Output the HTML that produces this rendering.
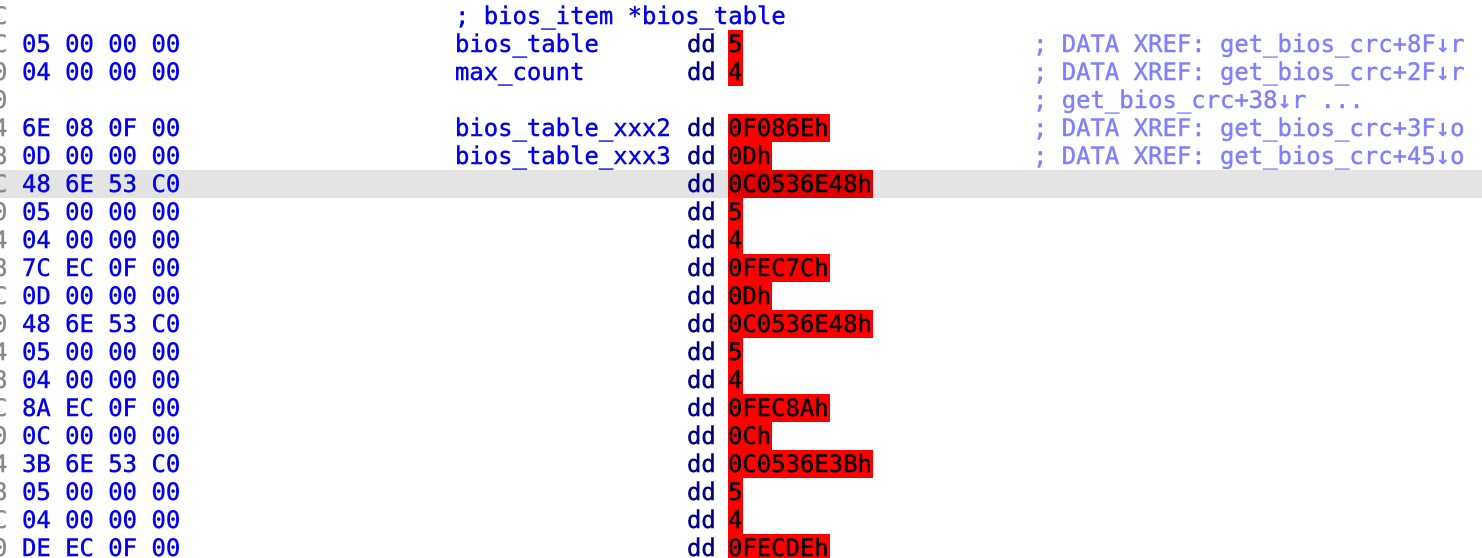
<!DOCTYPE html>
<html><head><meta charset="utf-8"><style>
html,body{margin:0;padding:0;background:#fff;width:1482px;height:558px;overflow:hidden}
body{position:relative;font-family:"DejaVu Sans Mono","Liberation Mono",monospace;font-size:23.9px}
.r{position:absolute;left:0;width:1482px;height:28px;line-height:28px;white-space:pre}
.r span{position:absolute;top:0;-webkit-text-stroke:0.45px currentColor}
.hl{background:#e4e4e4}
.g{left:-7px;color:#8a8a8a}
.h{left:22px;color:#0000ee}
.l{left:455px;color:#0000ee}
.d{left:687px;color:#000080}
.v{left:728px;background:#ff0000;color:#000;padding-right:1px}
.hl .v{background:#e00000}
.c{left:1033px;color:#8080ff}
</style></head><body>
<div class="r" style="top:2px"><span class="g">C</span><span class="l">; bios_item *bios_table</span></div>
<div class="r" style="top:30px"><span class="g">C</span><span class="h">05 00 00 00</span><span class="l">bios_table</span><span class="d">dd</span><span class="v">5</span><span class="c">; DATA XREF: get_bios_crc+8F↓r</span></div>
<div class="r" style="top:58px"><span class="g">0</span><span class="h">04 00 00 00</span><span class="l">max_count</span><span class="d">dd</span><span class="v">4</span><span class="c">; DATA XREF: get_bios_crc+2F↓r</span></div>
<div class="r" style="top:86px"><span class="g">0</span><span class="c">; get_bios_crc+38↓r ...</span></div>
<div class="r" style="top:114px"><span class="g">4</span><span class="h">6E 08 0F 00</span><span class="l">bios_table_xxx2</span><span class="d">dd</span><span class="v">0F086Eh</span><span class="c">; DATA XREF: get_bios_crc+3F↓o</span></div>
<div class="r" style="top:142px"><span class="g">8</span><span class="h">0D 00 00 00</span><span class="l">bios_table_xxx3</span><span class="d">dd</span><span class="v">0Dh</span><span class="c">; DATA XREF: get_bios_crc+45↓o</span></div>
<div class="r hl" style="top:170px"><span class="g">C</span><span class="h">48 6E 53 C0</span><span class="d">dd</span><span class="v">0C0536E48h</span></div>
<div class="r" style="top:198px"><span class="g">0</span><span class="h">05 00 00 00</span><span class="d">dd</span><span class="v">5</span></div>
<div class="r" style="top:226px"><span class="g">4</span><span class="h">04 00 00 00</span><span class="d">dd</span><span class="v">4</span></div>
<div class="r" style="top:254px"><span class="g">8</span><span class="h">7C EC 0F 00</span><span class="d">dd</span><span class="v">0FEC7Ch</span></div>
<div class="r" style="top:282px"><span class="g">C</span><span class="h">0D 00 00 00</span><span class="d">dd</span><span class="v">0Dh</span></div>
<div class="r" style="top:310px"><span class="g">0</span><span class="h">48 6E 53 C0</span><span class="d">dd</span><span class="v">0C0536E48h</span></div>
<div class="r" style="top:338px"><span class="g">4</span><span class="h">05 00 00 00</span><span class="d">dd</span><span class="v">5</span></div>
<div class="r" style="top:366px"><span class="g">8</span><span class="h">04 00 00 00</span><span class="d">dd</span><span class="v">4</span></div>
<div class="r" style="top:394px"><span class="g">C</span><span class="h">8A EC 0F 00</span><span class="d">dd</span><span class="v">0FEC8Ah</span></div>
<div class="r" style="top:422px"><span class="g">0</span><span class="h">0C 00 00 00</span><span class="d">dd</span><span class="v">0Ch</span></div>
<div class="r" style="top:450px"><span class="g">4</span><span class="h">3B 6E 53 C0</span><span class="d">dd</span><span class="v">0C0536E3Bh</span></div>
<div class="r" style="top:478px"><span class="g">8</span><span class="h">05 00 00 00</span><span class="d">dd</span><span class="v">5</span></div>
<div class="r" style="top:506px"><span class="g">C</span><span class="h">04 00 00 00</span><span class="d">dd</span><span class="v">4</span></div>
<div class="r" style="top:534px"><span class="g">0</span><span class="h">DE EC 0F 00</span><span class="d">dd</span><span class="v">0FECDEh</span></div>
</body></html>
